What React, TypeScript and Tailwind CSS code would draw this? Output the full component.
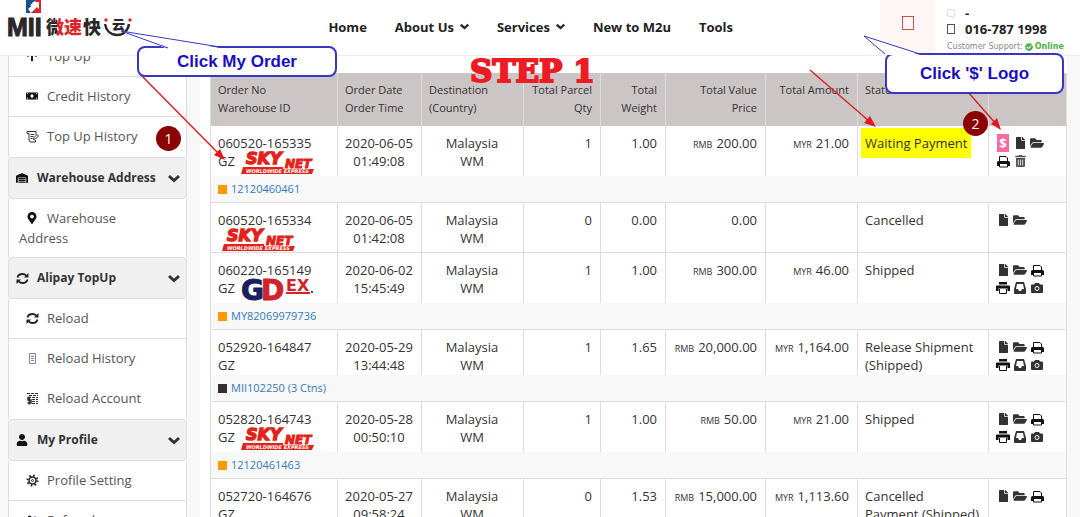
import type { ReactNode } from 'react';
import {
  FaArrowUp,
  FaCheckCircle,
  FaFile,
  FaFolderOpen,
  FaMapMarkerAlt,
  FaMoneyBill,
  FaTrashAlt,
  FaUser,
  FaUserFriends,
  FaWarehouse,
} from 'react-icons/fa';

const NAV = [
  { label: 'Home' },
  { label: 'About Us', menu: true },
  { label: 'Services', menu: true },
  { label: 'New to M2u' },
  { label: 'Tools' },
];

const SiteLogo = () => (
  <svg width="126" height="40" viewBox="0 0 126 40" role="img" aria-label="MII" className="overflow-visible">
    <defs>
      <linearGradient id="wei">
        <stop offset="62%" stopColor="#2b2627" />
        <stop offset="62%" stopColor="#d9252b" />
      </linearGradient>
    </defs>
    <path d="M18 0h10l-10 9z" fill="#1d4f8c" />
    <path d="M18 4v9h8l4-5z" fill="#1d4f8c" />
    <path d="M27 0h6v13h-9l5-6z" fill="#d9252b" />
    <path d="M20 9l6-5-2-2h7v7l-2-2-6 6z" fill="#fff" />
    <g fontWeight="900">
      <text x="-1" y="36" fontFamily="Liberation Sans, sans-serif" fontSize="25" fill="#2b2627" stroke="#2b2627">
        MII
      </text>
      <g fontFamily="Noto Sans CJK SC, sans-serif" fontSize="18">
        <text x="38" y="34" fill="url(#wei)">微</text>
        <text x="56" y="34" fill="#d9252b">速</text>
        <text x="75" y="34" fill="#2b2627">快</text>
      </g>
      <text x="104" y="29" fontFamily="Noto Sans CJK SC, sans-serif" fontSize="13" fill="#2b2627">
        云
      </text>
    </g>
    <path d="M97 24c1 6 5 11 12 11 6 0 11-4 12-11" fill="none" stroke="#2b2627" strokeWidth="2.4" />
    <circle cx="98" cy="20" r="1.7" fill="#d9252b" />
    <circle cx="122" cy="20" r="1.7" fill="#d9252b" />
  </svg>
);

const SkynetLogo = () => (
  <svg width="76" height="22" viewBox="0 0 76 22" role="img" aria-label="Skynet Worldwide Express" className="overflow-visible">
    <g fill="#e2231a" stroke="#e2231a" fontFamily="DejaVu Sans, sans-serif" fontWeight="bold" fontStyle="italic">
      <text x="5" y="12" fontSize="16" strokeWidth="1.4">SKY</text>
      <text x="44" y="16" fontSize="12" strokeWidth="1">NET</text>
    </g>
    <path d="M2 15h40v2h31l-2 5H0z" fill="#e2231a" />
    <text x="5" y="21" fontSize="5" fontFamily="DejaVu Sans, sans-serif" fontWeight="bold" fontStyle="italic" fill="#fff">
      WORLDWIDE EXPRESS
    </text>
  </svg>
);

const GdexLogo = () => (
  <svg width="76" height="22" viewBox="0 0 76 22" role="img" aria-label="GDEX" className="overflow-visible">
    <g fontFamily="DejaVu Sans, sans-serif" fontWeight="bold">
      <text x="20" y="21" fontSize="28" fill="#d2232a" stroke="#d2232a">D</text>
      <text x="0" y="21" fontSize="28" fill="#1b1f5e" stroke="#1b1f5e">G</text>
      <text x="45" y="12" fontSize="16" fill="#d2232a">EX</text>
    </g>
    <path d="M45 14h24" stroke="#d2232a" strokeWidth="2" />
    <circle cx="71" cy="13" r="1.2" fill="#555" />
  </svg>
);

const ChevronIcon = ({ className }: { className: string }) => (
  <svg viewBox="0 0 12 9" fill="none" stroke="currentColor" strokeWidth="3" className={className} aria-hidden="true">
    <path d="M1 2l5 4.500L11 2" />
  </svg>
);

const RefreshIcon = () => (
  <svg width="13" height="13" viewBox="0 0 13 13" fill="none" stroke="#222" strokeWidth="1.8">
    <path d="M1.500 5.500C2 3.500 4 2 6.500 2c1.500 0 2.800.6 3.800 1.700M11.500 7.500C11 9.500 9 11 6.500 11c-1.500 0-2.800-.6-3.800-1.700" />
    <path d="M12.500 1v4.500H8zM.500 12V7.500H5z" fill="#222" stroke="none" />
  </svg>
);

const NoteEditIcon = () => (
  <svg width="13" height="13" viewBox="0 0 13 13" fill="none" stroke="#333">
    <path d="M1 1.5h9v3M1 1.5v2h2v6.500a2 2 0 0 0 2 2h4.500v-2M4.500 4.500h4M4.500 6.500h3M4.500 8.500h2" />
    <path d="M7.500 9.500l.5-2 3-3 1.500 1.500-3 3z" />
  </svg>
);

const ListIcon = () => (
  <svg width="13" height="13" viewBox="0 0 13 13" fill="none" stroke="#888">
    <path d="M3.500 1.500h6v10h-6zM5 4.500h3M5 6.500h3M5 8.500h3" />
  </svg>
);

const AccountIcon = () => (
  <svg width="13" height="13" viewBox="0 0 13 13" fill="none" stroke="#333">
    <path d="M1 1.500h11M3 3.500h9M6 5.500h6M6 7.500h6M6 9.500h6M6 11.500h6" strokeDasharray="3 1" />
    <path d="M5 5.500H2v2.500h3v3H1.500M3.300 4.500v8" strokeWidth="1.5" />
  </svg>
);

const CogIcon = () => (
  <svg width="13" height="13" viewBox="0 0 13 13" fill="none" stroke="#222">
    <circle cx="6.500" cy="6.500" r="3.500" strokeWidth="1.5" />
    <circle cx="6.500" cy="6.500" r="5" strokeWidth="2" strokeDasharray="1.600 2.327" />
    <circle cx="6.500" cy="6.500" r="1" />
  </svg>
);

const PrinterIcon = () => (
  <svg width="13" height="13" viewBox="0 0 13 13" fill="#111">
    <path d="M2.500 6V1.500h6.500l1.500 1.500v3" fill="none" stroke="#111" />
    <path d="M1.500 6h10Q13 6 13 7.500V11h-2V9H2v2H0V7.500Q0 6 1.500 6z" />
    <path d="M2.500 9v3h8V9" fill="none" stroke="#111" />
  </svg>
);

const LabelPrinterIcon = () => (
  <svg width="14" height="12" viewBox="0 0 14 12" fill="#111">
    <path d="M3 0h8v2.500H3zM1 3.500h12q1 0 1 1V9h-2.500V6.500h-9V9H0V4.500q0-1 1-1z" />
    <path d="M3.500 7v4.500h7V7" fill="#fff" stroke="#111" />
  </svg>
);

const TrayIcon = () => (
  <svg width="12" height="12" viewBox="0 0 12 12" fill="#333">
    <path fillRule="evenodd" d="M2 0h8l2 7v4q0 1-1 1H1q-1 0-1-1V7zM3 2L2 7h2l1 2h2l1-2h2L9 2z" />
  </svg>
);

const CameraIcon = () => (
  <svg width="12" height="10" viewBox="0 0 12 10" fill="#333">
    <path d="M4 0h4l1 1.500h2q1 0 1 1V9q0 1-1 1H1q-1 0-1-1V2.500q0-1 1-1h2z" />
    <circle cx="6" cy="5.500" r="2" fill="none" stroke="#fff" />
  </svg>
);

const ACTIONS = {
  pay: {
    label: 'Pay',
    icon: <span className="bg-[#f76ca0] text-white font-bold w-3 leading-[18px] text-[13px]">$</span>,
  },
  file: { label: 'Details', icon: <FaFile className="h-3" /> },
  folder: { label: 'Open', icon: <FaFolderOpen className="w-3.5 h-3.5" /> },
  print: { label: 'Print', icon: <PrinterIcon /> },
  label: { label: 'Print label', icon: <LabelPrinterIcon /> },
  trash: { label: 'Delete', icon: <FaTrashAlt className="h-3 text-[#555]" /> },
  tray: { label: 'Inbox', icon: <TrayIcon /> },
  camera: { label: 'Photos', icon: <CameraIcon /> },
};

type Action = keyof typeof ACTIONS;

interface Order {
  no: string;
  warehouse?: string;
  courier?: 'skynet' | 'gdex';
  date: string;
  time: string;
  qty: number;
  weight: string;
  value: string;
  amount?: string;
  status: string;
  highlight?: boolean;
  actions: Action[];
  tracking?: string;
  dark?: boolean;
}

const SHIPPED: Action[] = ['file', 'folder', 'print', 'label', 'tray', 'camera'];

const ORDERS: Order[] = [
  { no: '060520-165335', warehouse: 'GZ', courier: 'skynet', date: '2020-06-05', time: '01:49:08', qty: 1, weight: '1.00', value: '200.00', amount: '21.00', status: 'Waiting Payment', highlight: true, actions: ['pay', 'file', 'folder', 'print', 'trash'], tracking: '12120460461' },
  { no: '060520-165334', courier: 'skynet', date: '2020-06-05', time: '01:42:08', qty: 0, weight: '0.00', value: '0.00', status: 'Cancelled', actions: ['file', 'folder'] },
  { no: '060220-165149', warehouse: 'GZ', courier: 'gdex', date: '2020-06-02', time: '15:45:49', qty: 1, weight: '1.00', value: '300.00', amount: '46.00', status: 'Shipped', actions: SHIPPED, tracking: 'MY82069979736' },
  { no: '052920-164847', warehouse: 'GZ', date: '2020-05-29', time: '13:44:48', qty: 1, weight: '1.65', value: '20,000.00', amount: '1,164.00', status: 'Release Shipment (Shipped)', actions: SHIPPED, tracking: 'MII102250 (3 Ctns)', dark: true },
  { no: '052820-164743', warehouse: 'GZ', courier: 'skynet', date: '2020-05-28', time: '00:50:10', qty: 1, weight: '1.00', value: '50.00', amount: '21.00', status: 'Shipped', actions: SHIPPED, tracking: '12120461463' },
  { no: '052720-164676', warehouse: 'GZ', date: '2020-05-27', time: '09:58:24', qty: 0, weight: '1.53', value: '15,000.00', amount: '1,113.60', status: 'Cancelled Payment (Shipped)', actions: ['file', 'folder', 'print'] },
];

const Money = ({ currency, children }: { currency: string; children: ReactNode }) => (
  <span className="whitespace-nowrap">
    <small className="text-[9px] mr-1">{currency}</small>
    {children}
  </span>
);

const Td = ({ className = '', children }: { className?: string; children?: ReactNode }) => (
  <td className={`align-top pl-[7px] pr-2 pt-2 border-r border-[#ddd] ${className}`}>{children}</td>
);

const OrderRows = ({ order }: { order: Order }) => (
  <>
    <tr className={order.tracking ? '' : '[&>td]:border-b'}>
      <Td className={order.courier ? 'h-[50px]' : 'h-[45px]'}>
        <div>{order.no}</div>
        <div className={`flex items-start gap-1.5 ${order.warehouse ? '' : 'pl-1'}`}>
          {order.warehouse}
          {order.courier === 'skynet' && <SkynetLogo />}
          {order.courier === 'gdex' && <GdexLogo />}
        </div>
      </Td>
      <Td className="text-center whitespace-nowrap">
        {order.date}
        <br />
        {order.time}
      </Td>
      <Td className="text-center">
        Malaysia
        <br />
        WM
      </Td>
      <Td className="text-right">{order.qty}</Td>
      <Td className="text-right">{order.weight}</Td>
      <Td className="text-right">
        {order.amount ? <Money currency="RMB">{order.value}</Money> : order.value}
      </Td>
      <Td className="text-right">{order.amount && <Money currency="MYR">{order.amount}</Money>}</Td>
      <Td>
        {order.highlight ? (
          <mark className="inline-block bg-[#ffff00] text-inherit -mx-1 -my-1.5 px-1 py-1.5 whitespace-nowrap">
            {order.status}
          </mark>
        ) : (
          order.status
        )}
      </Td>
      <Td>
        <div className="grid grid-cols-[14px_14px_14px] gap-x-[3px]">
          {order.actions.map((name) => (
            <button key={name} aria-label={ACTIONS[name].label} className="h-[18px] flex items-center justify-center">
              {ACTIONS[name].icon}
            </button>
          ))}
        </div>
      </Td>
    </tr>
    {order.tracking && (
      <tr>
        <td colSpan={9} className="h-[27px] px-[7px] bg-[#f8f8f8] border-r border-b border-[#ddd] text-[11px]">
          <div className="flex items-center gap-1">
            <span className={`w-[9px] h-[9px] ${order.dark ? 'bg-[#352d30]' : 'bg-[#f90]'}`} />
            <a href="#" className="text-[#337ab7]">
              {order.tracking}
            </a>
          </div>
        </td>
      </tr>
    )}
  </>
);

const SideHeading = ({ icon, children }: { icon: ReactNode; children: ReactNode }) => (
  <button className="w-full h-[42px] px-1.5 flex items-center gap-2 bg-[#f0f0f0] border border-[#ddd] rounded-sm font-bold text-[12px] text-[#333] text-left">
    <span className="w-3.5 flex justify-center text-[12px] text-[#111]">{icon}</span>
    <span className="flex-1 whitespace-nowrap">{children}</span>
    <ChevronIcon className="w-3 h-[9px]" />
  </button>
);

const SideLink = ({ icon, last, children }: { icon: ReactNode; last?: boolean; children: ReactNode }) => (
  <a
    href="#"
    className={`block min-h-10 py-[9px] pl-2.5 pr-6 bg-white border-x border-[#ddd] leading-5 text-[#555] ${last ? '' : 'border-b'}`}
  >
    <span className="inline-flex w-7 h-5 pl-1 pr-1.5 items-center justify-center align-top text-[12px] text-[#111]">
      {icon}
    </span>
    {children}
  </a>
);

const Callout = ({ className, tail, children }: { className: string; tail: ReactNode; children: ReactNode }) => (
  <div
    className={`absolute z-30 flex items-center justify-center bg-white border-2 border-[#3a36c4] rounded-lg text-[#1a10c0] text-[17px] font-bold font-['Liberation_Sans',sans-serif] ${className}`}
  >
    {tail}
    {children}
  </div>
);

const StepBadge = ({ className, children }: { className: string; children: ReactNode }) => (
  <span
    className={`absolute z-30 w-[25px] h-[25px] rounded-full bg-[#8b0000] text-white text-[14px] flex items-center justify-center ${className}`}
  >
    {children}
  </span>
);

const Arrows = () => (
  <svg className="absolute left-0 top-0 z-20 pointer-events-none" width="1080" height="200" aria-hidden="true">
    <g stroke="#d8232a" strokeWidth="1.5">
      <path d="M140 74L218 153" />
      <path d="M810 70L869 121" />
      <path d="M968 92L996 124" />
    </g>
    <g fill="#e3171d">
      <path d="M225 160l-11-5 6-6z" />
      <path d="M876 127l-12-4 6-7z" />
      <path d="M1001 130l-10-6 6-6z" />
    </g>
  </svg>
);

export default function App() {
  return (
    <div className="relative h-screen overflow-hidden bg-[#f8f8f8] text-[13px] leading-[18px] text-[#333] font-['Open_Sans',sans-serif]">
      <header className="relative z-10 h-14 flex bg-white border-b border-[#eee]">
        <a href="#" className="ml-2 flex-1">
          <SiteLogo />
        </a>
        <nav className="flex items-center gap-7 mr-[147px] pb-0.5 font-bold text-[#222]">
          {NAV.map((item) => (
            <a key={item.label} href="#" className="flex items-center gap-1.5 whitespace-nowrap">
              {item.label}
              {item.menu && <ChevronIcon className="w-[9px] h-[7px]" />}
            </a>
          ))}
        </nav>
        <div className="w-[55px] bg-[#fef6f4] flex justify-center pt-4">
          <span className="w-3 h-3.5 border border-[#cf5148]" />
        </div>
        <div className="w-[145px] pl-3 pt-1">
          <div className="flex items-center gap-2.5 font-bold text-[#222]">
            <span className="w-2 h-2 border border-[#ddd] rotate-12" />-
          </div>
          <div className="flex items-center gap-2.5 font-bold text-[#222] -mt-0.5">
            <span className="w-2 h-2.5 border border-[#555]" />
            016-787 1998
          </div>
          <div className="flex items-center gap-0.5 whitespace-nowrap text-[8px] text-[#888] font-['DejaVu_Sans',sans-serif]">
            Customer Support:
            <FaCheckCircle className="w-2 h-2 text-[#4bb543]" />
            <b className="text-[#4bb543]">Online</b>
          </div>
        </div>
      </header>

      <div className="flex">
        <aside className="w-[179px] ml-2 mr-[13px] -mt-[19px] shrink-0">
          <SideLink icon={<FaArrowUp />}>Top Up</SideLink>
          <SideLink icon={<FaMoneyBill />}>Credit History</SideLink>
          <SideLink icon={<NoteEditIcon />} last>Top Up History</SideLink>
          <SideHeading icon={<FaWarehouse />}>Warehouse Address</SideHeading>
          <SideLink icon={<FaMapMarkerAlt />} last>Warehouse Address</SideLink>
          <SideHeading icon={<RefreshIcon />}>Alipay TopUp</SideHeading>
          <SideLink icon={<RefreshIcon />}>Reload</SideLink>
          <SideLink icon={<ListIcon />} last>Reload History</SideLink>
          <SideLink icon={<AccountIcon />} last>Reload Account</SideLink>
          <SideHeading icon={<FaUser />}>My Profile</SideHeading>
          <SideLink icon={<CogIcon />}>Profile Setting</SideLink>
          <SideLink icon={<FaUserFriends />}>Referral</SideLink>
        </aside>

        <main className="flex-1 min-w-0 mr-[13px] pl-2.5 pt-[17px] bg-white">
          <table className="w-full table-fixed border-separate border-spacing-0 border-l border-[#ddd]">
            <colgroup>
              <col className="w-[127px]" />
              <col className="w-[84px]" />
              <col className="w-[102px]" />
              <col className="w-[77px]" />
              <col className="w-[65px]" />
              <col className="w-[100px]" />
              <col className="w-[92px]" />
              <col className="w-[131px]" />
              <col className="w-[78px]" />
            </colgroup>
            <thead>
              <tr className="bg-[#cbc5c5] text-[11px] text-left [&>th]:h-[53px] [&>th]:pl-[7px] [&>th]:pr-2 [&>th]:pt-2 [&>th]:align-top [&>th]:font-normal [&>th]:border-r [&>th]:border-[#ddd]">
                <th>Order No<br />Warehouse ID</th>
                <th>Order Date<br />Order Time</th>
                <th>Destination<br />(Country)</th>
                <th className="text-right whitespace-nowrap">Total Parcel<br />Qty</th>
                <th className="text-right">Total<br />Weight</th>
                <th className="text-right">Total Value<br />Price</th>
                <th className="text-right whitespace-nowrap">Total Amount</th>
                <th>Status</th>
                <th>Action</th>
              </tr>
            </thead>
            <tbody>
              {ORDERS.map((order) => (
                <OrderRows key={order.no} order={order} />
              ))}
            </tbody>
          </table>
        </main>
      </div>

      <Arrows />
      <strong className="absolute z-20 left-[470px] top-[55px] text-[31px] leading-8 whitespace-nowrap text-[#ec1c24] font-['DejaVu_Serif',serif] [-webkit-text-stroke:2px_#ec1c24]">
        STEP 1
      </strong>
      <StepBadge className="left-[156px] top-[126px]">1</StepBadge>
      <StepBadge className="left-[963px] top-[111px]">2</StepBadge>
      <Callout
        className="left-[137px] top-[46px] w-[200px] h-[31px]"
        tail={
          <svg className="absolute left-[-19px] top-[-18px]" width="100" height="19" aria-hidden="true">
            <path d="M48 19L1 1l99 17z" fill="#fff" />
            <path d="M48 18L1 1l99 16" fill="none" stroke="#3a36c4" />
          </svg>
        }
      >
        Click My Order
      </Callout>
      <Callout
        className="left-[885px] top-[53px] w-[179px] h-[41px]"
        tail={
          <svg className="absolute left-[-24px] top-[-20px]" width="80" height="20" aria-hidden="true">
            <path d="M22 20L1 1l56 19z" fill="#fff" />
            <path d="M22 19L1 1l56 18" fill="none" stroke="#3a36c4" />
          </svg>
        }
      >
        Click '$' Logo
      </Callout>
    </div>
  );
}
